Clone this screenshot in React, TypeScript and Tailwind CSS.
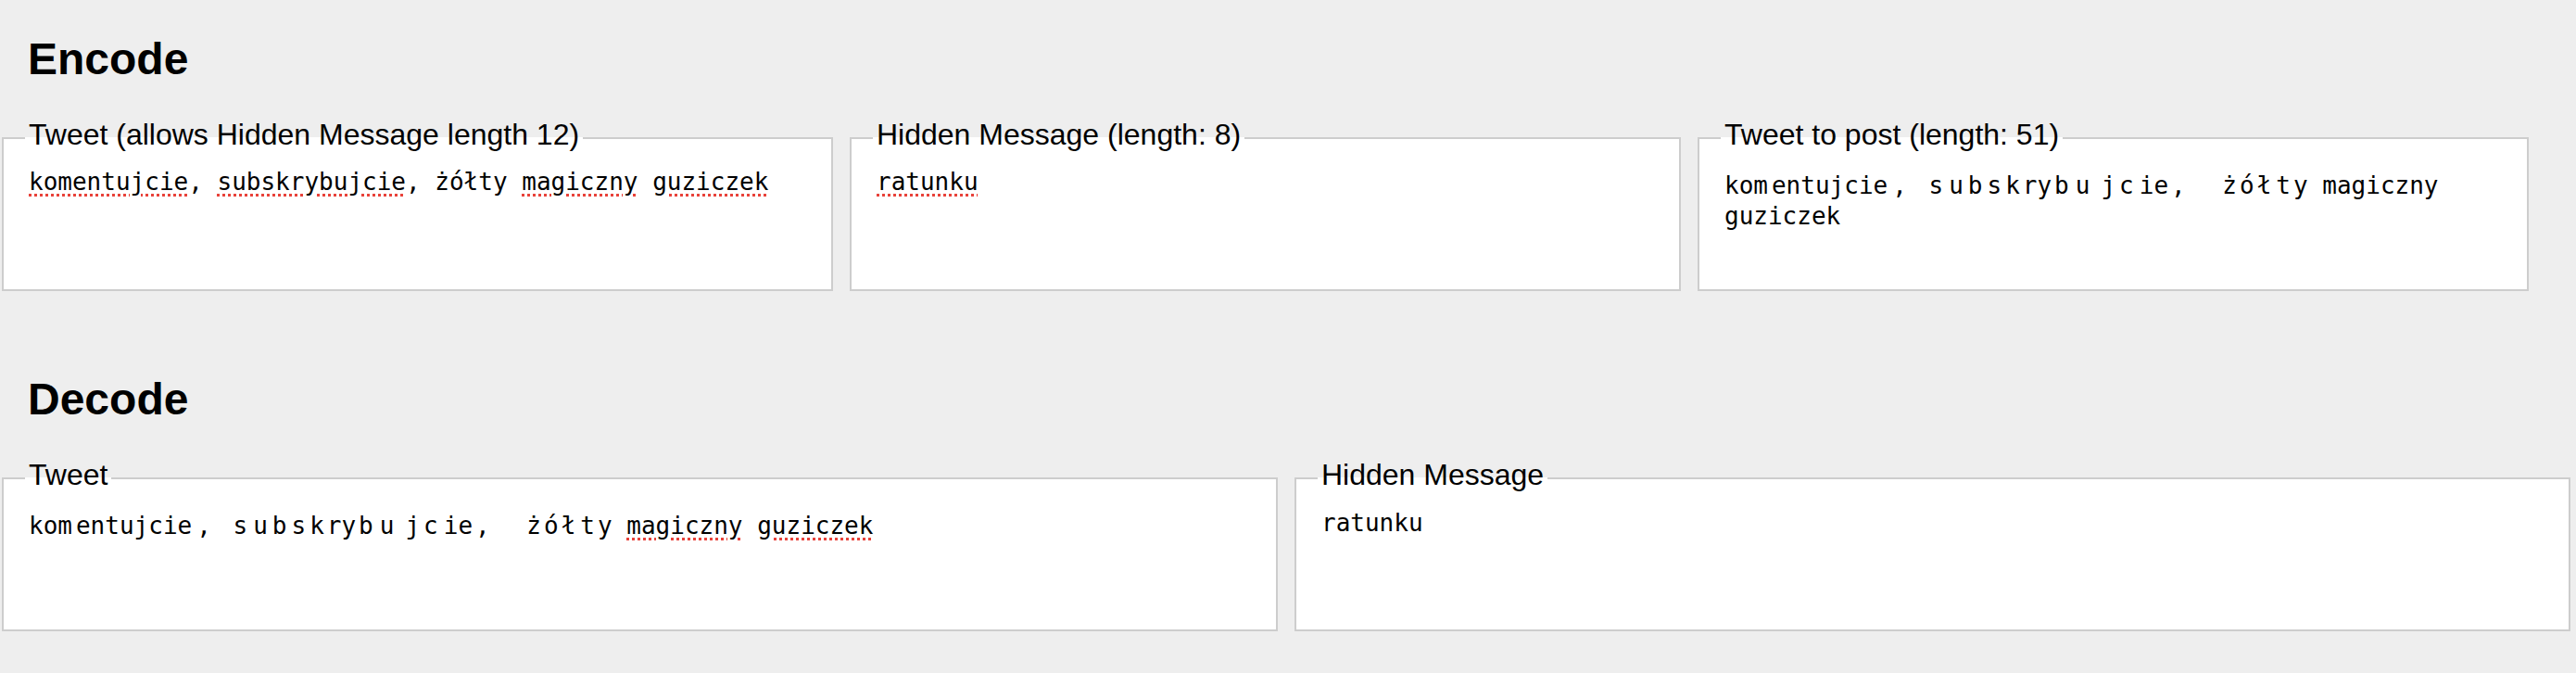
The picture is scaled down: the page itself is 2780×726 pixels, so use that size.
import React from "react";

const spell =
  "underline decoration-dotted decoration-[#e8423a] decoration-3 underline-offset-4";

type Seg = { c: string; t: string };

const encoded: Seg[] = [
  { c: "", t: "kom" },
  { c: "ml-[4px]", t: "entujcie" },
  { c: "ml-[5px]", t: ", " },
  { c: "ml-[8px]", t: "s" },
  { c: "ml-[6px]", t: "u" },
  { c: "ml-[5px]", t: "b" },
  { c: "ml-[5px]", t: "s" },
  { c: "ml-[4px]", t: "k" },
  { c: "ml-[3px]", t: "ry" },
  { c: "ml-[3px]", t: "b" },
  { c: "ml-[7px]", t: "u" },
  { c: "ml-[12px]", t: "j" },
  { c: "ml-[4px]", t: "c" },
  { c: "ml-[6px]", t: "ie" },
  { c: "ml-[3px]", t: ", " },
  { c: "ml-[24px]", t: "ż" },
  { c: "ml-[3px]", t: "ó" },
  { c: "ml-[3px]", t: "ł" },
  { c: "ml-[5px]", t: "t" },
  { c: "ml-[3px]", t: "y" },
];

function Encoded({ marked }: { marked: boolean }) {
  return (
    <>
      {encoded.map((s, i) => (
        <span key={i} className={s.c}>
          {s.t}
        </span>
      ))}{" "}
      <span className={marked ? spell : ""}>magiczny</span>{" "}
      <span className={marked ? spell : ""}>guziczek</span>
    </>
  );
}

function Box({
  label,
  width,
  pt,
  children,
}: {
  label: string;
  width: string;
  pt: string;
  children: React.ReactNode;
}) {
  return (
    <fieldset className={`min-w-0 shrink-0 border-2 border-[#cdcdcd] bg-white ${width}`}>
      <legend className="ml-[23px] px-[4px] text-[32px] leading-[36px]">
        <span className="relative -top-[4px]">{label}</span>
      </legend>
      <div
        className={`h-[145px] overflow-hidden px-[27px] font-['DejaVu_Sans_Mono','Liberation_Mono',monospace] text-[26px] leading-[33px] ${pt}`}
      >
        {children}
      </div>
    </fieldset>
  );
}

export default function App() {
  return (
    <div className="min-h-screen bg-[#eeeeee] px-[2px] pt-[36px] font-['Liberation_Sans',Arial,sans-serif] text-black">
      <h1 className="pl-[28px] text-[48px] font-bold leading-[56px]">Encode</h1>
      <div className="mt-[39px] flex gap-[18px]">
        <Box label="Tweet (allows Hidden Message length 12)" width="w-[897px]" pt="pt-[13px]">
          <span className={spell}>komentujcie</span>,{" "}
          <span className={spell}>subskrybujcie</span>, żółty{" "}
          <span className={spell}>magiczny</span> <span className={spell}>guziczek</span>
        </Box>
        <Box label="Hidden Message (length: 8)" width="w-[897px]" pt="pt-[13px]">
          <span className={spell}>ratunku</span>
        </Box>
        <Box label="Tweet to post (length: 51)" width="w-[897px]" pt="pt-[17px]">
          <Encoded marked={false} />
        </Box>
      </div>

      <h1 className="mt-[89px] pl-[28px] text-[48px] font-bold leading-[56px]">Decode</h1>
      <div className="mt-[39px] flex gap-[18px]">
        <Box label="Tweet" width="w-[1377px]" pt="pt-[17px]">
          <Encoded marked={true} />
        </Box>
        <Box label="Hidden Message" width="w-[1377px]" pt="pt-[14px]">
          ratunku
        </Box>
      </div>
    </div>
  );
}
